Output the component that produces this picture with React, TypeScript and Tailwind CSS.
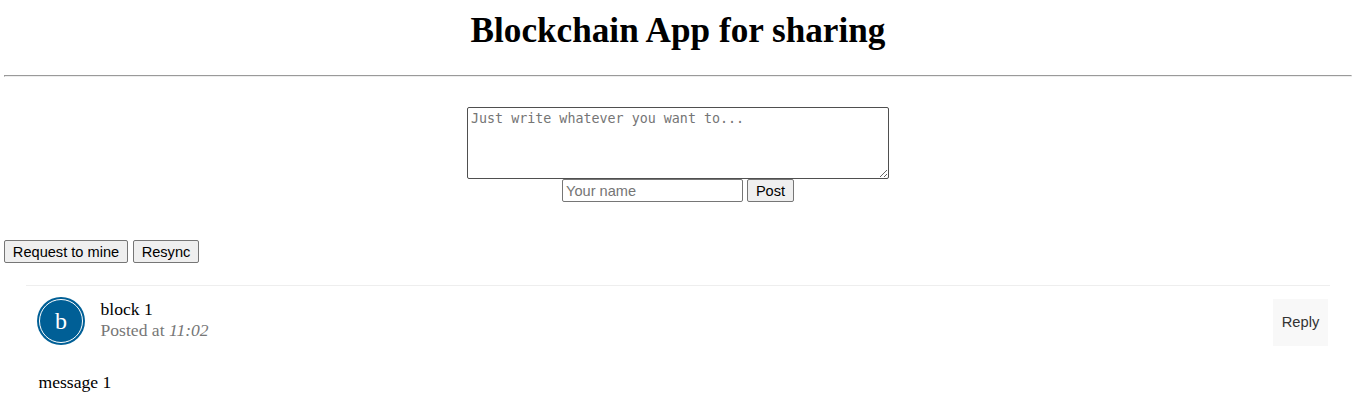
import React from "react";

const control = "box-border rounded-[2px] border border-[#767676] font-['Liberation_Sans',sans-serif] text-[14.6px]";

function Button({ label, className }: { label: string; className: string }) {
  return (
    <button className={`${control} flex h-[23px] items-center justify-center whitespace-nowrap bg-[#efefef] px-0 pb-0 pt-px leading-[18px] text-black ${className}`}>
      {label}
    </button>
  );
}

export default function App() {
  return (
    <main className="h-[403px] overflow-hidden bg-white pl-1 pr-[9px] font-['Liberation_Serif',serif] text-[17.6px] text-black">
      <h1 className="pt-[11px] text-center text-[35.2px] font-bold leading-[40px]">Blockchain App for sharing</h1>
      <hr className="mt-6 h-[2px] border border-[#9a9a9a] border-b-[#eeeeee] border-r-[#eeeeee]" />
      <form className="mt-[30px] flex flex-col items-center">
        <textarea
          placeholder="Just write whatever you want to..."
          className="block h-[72px] w-[422px] resize rounded-[2px] border border-[#4f4f4f] bg-white px-[3px] py-[2px] font-['DejaVu_Sans_Mono',monospace] text-[13.35px] leading-[17px] placeholder:text-[#757575]"
        />
        <div className="flex gap-1">
          <input placeholder="Your name" className={`${control} h-[23px] w-[181px] bg-white px-[3px] placeholder:text-[#757575]`} />
          <Button label="Post" className="w-[47px]" />
        </div>
      </form>
      <div className="mt-[38px] flex gap-[5px]">
        <Button label="Request to mine" className="w-[124px]" />
        <Button label="Resync" className="w-[66px]" />
      </div>
      <article className="ml-[22px] mr-[22px] mt-[22px] border-t border-[#eeeeee]">
        <header className="flex h-[60px] items-start pl-[11px] pt-[11px]">
          <div className="flex size-12 items-center justify-center rounded-full bg-[#005f96] p-[2px]">
            <div className="flex size-11 items-center justify-center rounded-full border border-white text-[24px] leading-none text-white">b</div>
          </div>
          <div className="ml-[15.5px] mt-[2px] leading-[21px]">
            <div>block 1</div>
            <div className="text-[#777777]">Posted at <i>11:02</i></div>
          </div>
          <button className="ml-auto mr-[2px] mt-[2px] h-[47px] w-[55px] bg-[#f8f8f8] font-['Liberation_Sans',sans-serif] text-[14.7px] text-[#333333]">Reply</button>
        </header>
        <p className="ml-[12.5px] mt-[26px] leading-[21px]">message 1</p>
      </article>
    </main>
  );
}
